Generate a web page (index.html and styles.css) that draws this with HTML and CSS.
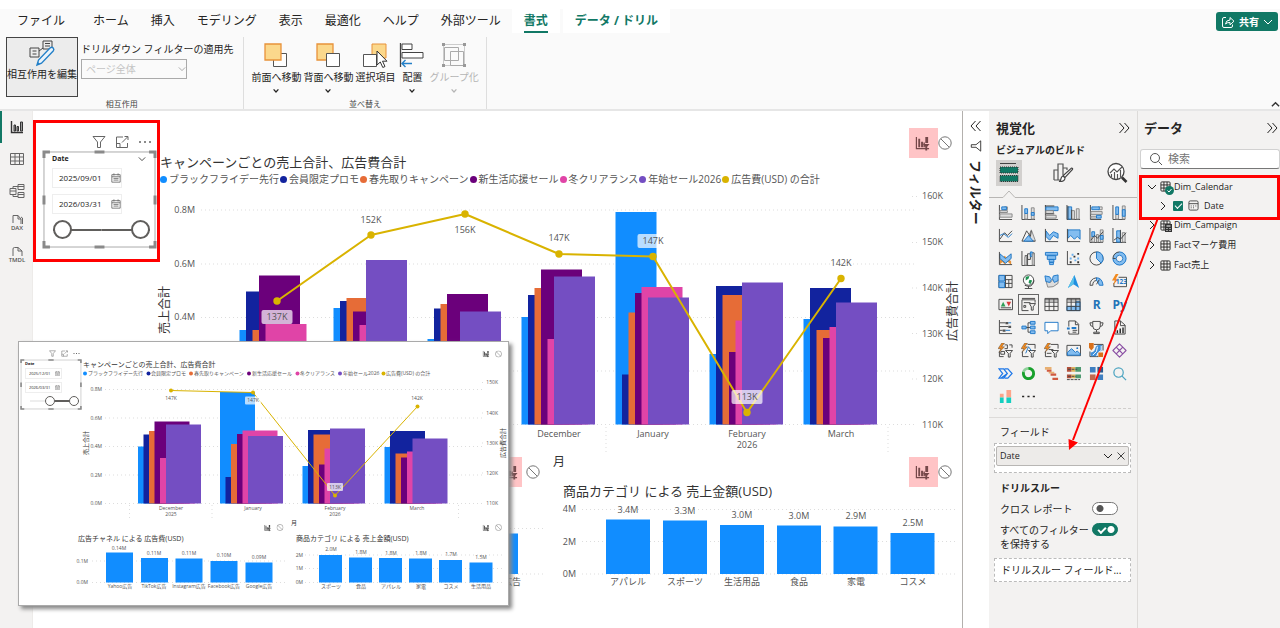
FILE: index.html
```html
<!DOCTYPE html>
<html lang="ja">
<head>
<meta charset="utf-8">
<title>レポート</title>
<link rel="stylesheet" href="styles.css">
</head>
<body>
<svg class="defs" width="0" height="0" aria-hidden="true">
  <symbol id="ix" viewBox="0 0 16 16"><path d="M1.500 1v12.500H15" fill="none" stroke="currentColor" stroke-width="1.300"/><path d="M3.500 3h2v9h-2zM6.500 6h2v6h-2zM9 7h1.500v5H9zM11 1h3v6.500h-3z" fill="currentColor"/><path d="M8.500 8.500h7l-2.500 3V15.500h-2v-4z" fill="currentColor"/></symbol>
  <symbol id="no" viewBox="0 0 14 14"><circle cx="7" cy="7" r="6.200" fill="none" stroke="#777" stroke-width="1"/><path d="M2.800 2.800l8.400 8.400" stroke="#777"/></symbol>
  <symbol id="funnel" viewBox="0 0 14 14"><path d="M1 1.500h12L8.500 7v5.500h-3V7z" fill="none" stroke="currentColor"/></symbol>
  <symbol id="focus" viewBox="0 0 14 14"><path d="M8 2H1.500v10.500h11V8M1.500 8.500H5v4M7 7.500l5.500-5.500M9.500 1.500h3.500V5" fill="none" stroke="currentColor"/></symbol>
  <symbol id="dots" viewBox="0 0 14 14"><path d="M1 6.200h2v1.600H1zM6 6.200h2v1.600H6zM11 6.200h2v1.600h-2z" fill="currentColor"/></symbol>
  <symbol id="cal" viewBox="0 0 12 12"><path d="M1 2h10v9H1zM1 4.500h10M3.500.500V3M8.500.500V3M3 6.500h6M3 8.500h6" fill="none" stroke="currentColor"/></symbol>
  <symbol id="down" viewBox="0 0 10 10"><path d="M1 3l4 4 4-4" fill="none" stroke="currentColor"/></symbol>
  <symbol id="bdown" viewBox="0 0 10 10"><path d="M2 3l3 3.200L8 3" fill="none" stroke="currentColor" stroke-width="1.600"/></symbol>
  <symbol id="right" viewBox="0 0 10 10"><path d="M3 1l4 4-4 4" fill="none" stroke="currentColor"/></symbol>
  <symbol id="dbl" viewBox="0 0 12 12"><path d="M1.500 1l4.500 5-4.500 5M6.500 1l4.500 5-4.500 5" fill="none" stroke="currentColor" stroke-width="1"/></symbol>
  <symbol id="grid" viewBox="0 0 12 12"><path d="M2 1h8q1 0 1 1v8q0 1-1 1H2q-1 0-1-1V2q0-1 1-1zM1 4.300h10M1 7.700h10M4.300 1v10M7.700 1v10" fill="none" stroke="currentColor"/></symbol>
  <symbol id="frame" viewBox="0 0 116 100" preserveAspectRatio="none"><path d="M2 2h112v96H2z" fill="none" stroke="#aaa"/><path d="M2 8V2h6M108 2h6v6M114 92v6h-6M8 98H2v-6" fill="none" stroke="#8a8a8a" stroke-width="3"/><path d="M53 2h10M53 98h10M2 46v9M114 46v9" stroke="#8a8a8a" stroke-width="3"/></symbol>
</svg>

<header class="ribbon">
  <div class="menu">
    <nav class="tabs">
      <a class="tab tab-file" href="#">ファイル</a>
      <a class="tab" href="#">ホーム</a>
      <a class="tab" href="#">挿入</a>
      <a class="tab" href="#">モデリング</a>
      <a class="tab" href="#">表示</a>
      <a class="tab" href="#">最適化</a>
      <a class="tab" href="#">ヘルプ</a>
      <a class="tab" href="#">外部ツール</a>
      <a class="tab tab-context tab-active" href="#"><span>書式</span></a>
      <a class="tab tab-context" href="#">データ / ドリル</a>
    </nav>
    <button class="share"><svg width="14" height="14" viewBox="0 0 14 14"><path d="M5 2.500H3q-1.500 0-1.500 1.500v7q0 1.500 1.500 1.500h7q1.500 0 1.500-1.500V9.500M4.500 9q.5-4 4.500-4V2.500l4 3.700-4 3.600V7.500q-3-.2-4.500 1.500z" fill="none" stroke="#fff"/></svg>共有<svg width="10" height="10"><use href="#down"/></svg></button>
  </div>
  <div class="tools">
    <section class="group">
      <div class="group-body">
        <button class="tool tool-pressed">
          <svg width="28" height="28" viewBox="0 0 28 28"><path d="M2 9h9v9H2zM15 2h9v8h-9zM4.500 12h4M4.500 15h4M17 4.500h5M17 7h5M11 12l4-3" fill="none" stroke="#444"/><path d="M9 26l1.500-5L22 9q2-1.500 3.200 0 1.300 1.500 0 3L13.500 24.200z" fill="#eaf3fb" stroke="#2480c8" stroke-width="1.400"/><path d="M9 26l1-3 2 2z" fill="#2480c8"/></svg>
          <span>相互作用を編集</span>
        </button>
        <div class="apply">
          <label for="scope">ドリルダウン フィルターの適用先</label>
          <span class="select-wrap"><select id="scope" disabled><option>ページ全体</option></select><svg width="8" height="8"><use href="#down"/></svg></span>
        </div>
      </div>
      <div class="group-name">相互作用</div>
    </section>
    <section class="group">
      <div class="group-body">
        <button class="tool"><svg width="26" height="26" viewBox="0 0 26 26"><path d="M10.500 11.500h13v13h-13z" fill="#fff" stroke="#555"/><path d="M2 2h16v16H2z" fill="#fbd88c" stroke="#e8923a" stroke-width="1.300"/></svg><span>前面へ移動</span><svg width="8" height="8"><use href="#bdown"/></svg></button>
        <button class="tool"><svg width="26" height="26" viewBox="0 0 26 26"><path d="M2 2h16v16H2z" fill="#fbd88c" stroke="#e8923a" stroke-width="1.300"/><path d="M11.500 11.500h13v13h-13z" fill="#fff" stroke="#555"/></svg><span>背面へ移動</span><svg width="8" height="8"><use href="#bdown"/></svg></button>
        <button class="tool"><svg width="26" height="26" viewBox="0 0 26 26"><path d="M10 2h14v14H10z" fill="#fbd88c" stroke="#e8923a"/><path d="M1.500 12.500h13v12h-13z" fill="#fff" stroke="#555"/><path d="M15 9v14l3.300-3 2.500 5.500 2.200-1-2.500-5.300h4.500z" fill="#fff" stroke="#333"/></svg><span>選択項目</span></button>
        <button class="tool tool-narrow"><svg width="26" height="26" viewBox="0 0 26 26"><path d="M1.500 1v24" stroke="#444" stroke-width="1.300"/><path d="M3 2h10v5.500H3zM3 10.500h21v5.500H3z" fill="#fff" stroke="#444"/><path d="M13 21.500H3M6.500 18l-3.500 3.500L6.500 25" fill="none" stroke="#2480c8" stroke-width="1.400"/></svg><span>配置</span><svg width="8" height="8"><use href="#bdown"/></svg></button>
        <button class="tool tool-off" disabled><svg width="26" height="26" viewBox="0 0 26 26"><path d="M2.500 2.500h21v21h-21z" fill="none" stroke="#ccc"/><path d="M3.500 5.500h14v13h-14zM9.500 9.500h13v14h-13z" fill="none" stroke="#aaa"/><path d="M1 1h3v3H1zM22 1h3v3h-3zM1 22h3v3H1zM22 22h3v3h-3z" fill="#999"/></svg><span>グループ化</span><svg width="8" height="8"><use href="#bdown"/></svg></button>
      </div>
      <div class="group-name">並べ替え</div>
    </section>
    <button class="collapse" aria-label="リボンを折りたたむ"><svg width="9" height="9" viewBox="0 0 10 10"><path d="M1 7l4-4 4 4" fill="none" stroke="#333" stroke-width="1.600"/></svg></button>
  </div>
</header>

<main class="work">
  <nav class="rail">
    <a class="rail-item rail-on" href="#" aria-label="レポート"><svg width="14" height="14" viewBox="0 0 14 14"><path d="M1.500 1v11.500H13" fill="none" stroke="#333" stroke-width="1.400"/><path d="M4 5h1.500v6H4zM7 6.500h1.500V11H7zM10.500 2h2v9h-2z" fill="#999" stroke="#333"/></svg></a>
    <a class="rail-item" href="#" aria-label="テーブル"><svg width="14" height="14" viewBox="0 0 14 14"><path d="M.500 1.500h13v11H.500zM.500 5h13M.500 9h13M5 1.500v11M9.500 1.500v11" fill="none" stroke="#666"/></svg></a>
    <a class="rail-item" href="#" aria-label="モデル"><svg width="16" height="16" viewBox="0 0 16 16"><path d="M1 5.500h6v6H1zM1 8h6M9 1.500h6v5H9zM9 3.500h6M9 9.500h6v5H9zM9 11.500h6M4 5.500v-2h5M4 11.500v2h5" fill="none" stroke="#666"/></svg></a>
    <a class="rail-item" href="#"><svg width="14" height="10" viewBox="0 0 14 10"><path d="M3 8V.500h5L11 4v5M8 .500V4h3M11 2l1.500 1v6" fill="none" stroke="#666"/></svg><span>DAX</span></a>
    <a class="rail-item" href="#"><svg width="14" height="10" viewBox="0 0 14 10"><path d="M3 9V2q0-1.500 1.500-1.500H8L12 4v5M8 .500V4h4" fill="none" stroke="#666"/></svg><span>TMDL</span></a>
  </nav>

  <div class="report">
    <section class="slicer slicer-marked">
      <div class="slicer-icons"><svg><use href="#funnel"/></svg><svg><use href="#focus"/></svg><svg><use href="#dots"/></svg></div>
      <div class="slicer-frame">
        <svg class="handles"><use href="#frame" width="100%" height="100%"/></svg>
        <div class="slicer-head"><b>Date</b><svg width="8" height="8"><use href="#down"/></svg></div>
        <label class="date"><input type="text" value="2025/09/01" aria-label="開始日"><svg><use href="#cal"/></svg></label>
        <label class="date"><input type="text" value="2026/03/31" aria-label="終了日"><svg><use href="#cal"/></svg></label>
        <div class="span"><input type="range" value="0" aria-label="開始"><input type="range" value="100" aria-label="終了"></div>
      </div>
    </section>

    <section class="visual visual-main">
      <div class="actions"><button class="act act-marked" aria-label="フィルター"><svg><use href="#ix"/></svg></button><button class="act act-none" aria-label="なし"><svg><use href="#no"/></svg></button></div>
      <h2>キャンペーンごとの売上合計、広告費合計</h2>
      <ul class="legend">
        <li class="s1">ブラックフライデー先行</li><li class="s2">会員限定プロモ</li><li class="s3">春先取りキャンペーン</li><li class="s4">新生活応援セール</li><li class="s5">冬クリアランス</li><li class="s6">年始セール2026</li><li class="s7">広告費(USD) の合計</li>
      </ul>
      <svg class="chart" viewBox="160 187 797 285">
        <g class="rule"><path d="M201 210H915M201 264H915M201 317.500H915M201 371H915M201 424.500H915M912 196.500h5M912 242.500h5M912 288h5M912 333.500h5M912 379h5M606 427v27M888 427v27"/></g>
        <path class="f1" d="M239.500 330h41V424.500h-41zM333.500 308h41V424.500h-41zM427.500 339h41V424.500h-41zM521.500 317h41V424.500h-41zM615.500 212h41V424.500h-41zM709.500 354h41V424.500h-41zM803.500 319h41V424.500h-41z"/>
        <path class="f2" d="M246 291.500h41V424.500h-41zM340 301h41V424.500h-41zM434 308.500h41V424.500h-41zM528 295h41V424.500h-41zM622 374.500h41V424.500h-41zM716 286h41V424.500h-41zM810 288h41V424.500h-41z"/>
        <path class="f3" d="M252.500 330h41V424.500h-41zM346.500 298h41V424.500h-41zM440.500 304h41V424.500h-41zM534.500 288h41V424.500h-41zM628.500 312.500h41V424.500h-41zM722.500 295h41V424.500h-41zM816.500 330h41V424.500h-41z"/>
        <path class="f4" d="M259 275.500h41V424.500h-41zM353 311.500h41V424.500h-41zM447 294h41V424.500h-41zM541 269.500h41V424.500h-41zM635 293h41V424.500h-41zM729 352h41V424.500h-41zM823 338h41V424.500h-41z"/>
        <path class="f5" d="M265.500 324h41V424.500h-41zM359.500 325h41V424.500h-41zM547.500 339h41V424.500h-41zM641.500 287h41V424.500h-41zM735.500 320.500h41V424.500h-41zM829.500 327h41V424.500h-41z"/>
        <path class="f6" d="M366 260h41V424.500h-41zM460 311.500h41V424.500h-41zM554 276.500h41V424.500h-41zM648 297.500h41V424.500h-41zM742 282.500h41V424.500h-41zM836 302.500h41V424.500h-41z"/>
        <path class="line" d="M277 301L371 235 465 214 559 254 653 256.500 747 412.500 841 278.500"/>
        <g class="f7"><circle cx="277" cy="301" r="3.700"/><circle cx="371" cy="235" r="3.700"/><circle cx="465" cy="214" r="3.700"/><circle cx="559" cy="254" r="3.700"/><circle cx="653" cy="256.500" r="3.700"/><circle cx="747" cy="412.500" r="3.700"/><circle cx="841" cy="278.500" r="3.700"/></g>
        <g class="tag"><rect x="261.500" y="310" width="31" height="14" rx="2"/><rect x="637.500" y="234" width="31" height="14" rx="2"/><rect x="731.500" y="390" width="31" height="14" rx="2"/></g>
        <g class="txt mid"><text x="277" y="320">137K</text><text x="371" y="223">152K</text><text x="465" y="233">156K</text><text x="559" y="241">147K</text><text x="653" y="244">147K</text><text x="747" y="400">113K</text><text x="841" y="266">142K</text>
          <text x="559" y="437">December</text><text x="653" y="437">January</text><text x="747" y="437">February</text><text x="841" y="437">March</text><text x="747" y="448">2026</text></g>
        <g class="txt end"><text x="195" y="213">0.8M</text><text x="195" y="267">0.6M</text><text x="195" y="320">0.4M</text><text x="943" y="199">160K</text><text x="943" y="245">150K</text><text x="943" y="291">140K</text><text x="943" y="337">130K</text><text x="943" y="382">120K</text><text x="943" y="428">110K</text></g>
        <g class="axis mid"><text transform="translate(169 310) rotate(-90)">売上合計</text><text transform="translate(957 311) rotate(-90)">広告費合計</text><text x="559" y="466">月</text></g>
      </svg>
    </section>

    <div class="lower">
      <section class="visual visual-channel">
        <div class="actions"><button class="act act-marked" aria-label="フィルター"><svg><use href="#ix"/></svg></button><button class="act act-none" aria-label="なし"><svg><use href="#no"/></svg></button></div>
        <svg class="chart" viewBox="160 487 385 104">
          <path class="rule" d="M190 528.500H545M190 574H545"/>
          <path class="f1" d="M474 533.500h44V574h-44z"/>
          <g class="txt end"><text x="521" y="585">広告</text></g>
        </svg>
      </section>
      <section class="visual">
        <div class="actions"><button class="act act-marked" aria-label="フィルター"><svg><use href="#ix"/></svg></button><button class="act act-none" aria-label="なし"><svg><use href="#no"/></svg></button></div>
        <h2 class="inset">商品カテゴリ による 売上金額(USD)</h2>
        <svg class="chart" viewBox="557 501 400 90">
          <path class="rule" d="M582 509.500H957M582 541.500H957M582 574H957"/>
          <path class="f1" d="M606 519.500h44V574h-44zM663 520.500h44V574h-44zM720 525h44V574h-44zM777 525.500h44V574h-44zM833.500 526.500h44V574h-44zM890.500 533h44V574h-44z"/>
          <g class="txt mid"><text x="628" y="513">3.4M</text><text x="685" y="514">3.3M</text><text x="742" y="518">3.0M</text><text x="799" y="519">3.0M</text><text x="856" y="519">2.9M</text><text x="913" y="526">2.5M</text>
            <text x="628" y="585">アパレル</text><text x="685" y="585">スポーツ</text><text x="742" y="585">生活用品</text><text x="799" y="585">食品</text><text x="856" y="585">家電</text><text x="913" y="585">コスメ</text></g>
          <g class="txt end"><text x="576" y="512">4M</text><text x="576" y="545">2M</text><text x="576" y="577">0M</text></g>
        </svg>
      </section>
    </div>
  </div>

  <aside class="filters">
    <button class="plain flip" aria-label="展開"><svg width="12" height="12"><use href="#dbl"/></svg></button>
    <svg class="turn" width="12" height="12"><use href="#funnel"/></svg>
    <h3>フィルター</h3>
  </aside>

  <div class="panes">
    <aside class="viz">
      <div class="pane-head"><h3>視覚化</h3><button class="plain" aria-label="折りたたむ"><svg width="12" height="12"><use href="#dbl"/></svg></button></div>
      <h4>ビジュアルのビルド</h4>
      <div class="modes">
        <button class="mode mode-on" aria-label="ビルド"><svg width="22" height="22" viewBox="0 0 22 22"><path d="M2 1.500h16" stroke="#444"/><path d="M2 5h18v6H2zM2 13.500h18v6H2z" fill="#117865" stroke="#333" stroke-dasharray="1 1"/></svg></button>
        <button class="mode" aria-label="書式"><svg width="22" height="22" viewBox="0 0 22 22"><path d="M2 18V8h4v10M6 18V2h5v11M11 12V6h4v2M2 18h7" fill="none" stroke="#555" stroke-width="1.200"/><path d="M19.500 6q1.500 0 1 1.500L13 15.500l-2-1.800zM11 14l2 1.800q0 4-6 3.700 2-.5 2-3 .5-2 2-2.500z" fill="#fff" stroke="#444" stroke-width="1.200"/></svg></button>
        <button class="mode" aria-label="分析"><svg width="22" height="22" viewBox="0 0 22 22"><circle cx="10" cy="9.500" r="8" fill="#fff" stroke="#444" stroke-width="1.300"/><path d="M4 11l4-4 3 3 5-5M5.500 15v-3M8.500 17v-7M11.500 17v-5M14.500 15V8" fill="none" stroke="#555" stroke-width="1.200"/><path d="M16 15.500l4.500 4.500" stroke="#333" stroke-width="2.600"/></svg></button>
      </div>
      <svg class="notch" viewBox="0 0 148 8" preserveAspectRatio="none"><path d="M0 7.500h14L20 1l6 6.500h122" fill="none" stroke="#b8b6b4"/></svg>
      <div class="gallery">
        <button aria-label="積み上げ横棒"><svg viewBox="0 0 16 16"><path class="k" d="M1.500 0v15.500"/><path class="g" d="M2 9.500h13v3.500H2zM7 2h3v3H7zM2 6h8v2H2z"/><path class="b" d="M4 2h5v3H4z"/><path class="k" d="M1.500 15.500H15"/></svg></button>
        <button aria-label="積み上げ縦棒"><svg viewBox="0 0 16 16"><path class="k" d="M1 0v15.500h14"/><path class="g" d="M4 9h3v6H4zM11 3h3v12h-3z"/><path class="b" d="M4 4h3v5H4zM11 8h3v3h-3z"/></svg></button>
        <button aria-label="集合横棒"><svg viewBox="0 0 16 16"><path class="k" d="M1.500 0v15.500H15"/><path class="b" d="M2 2h13v4H2z"/><path class="g" d="M2 6h8v3H2zM2 11h11v3H2z"/><path class="k" d="M1 1h10M2 9.500h9"/></svg></button>
        <button aria-label="集合縦棒"><svg viewBox="0 0 16 16"><path class="k" d="M1 0v15.500h14"/><path class="b" d="M2 2h4v13H2z"/><path class="g" d="M6 6h3v9H6zM11 4h3v11h-3z"/><path class="k" d="M2 1v14M6 5v10"/></svg></button>
        <button aria-label="100%横棒"><svg viewBox="0 0 16 16"><path class="k" d="M1.500 0v15.500H13"/><path class="g" d="M10 2h4v3h-4zM2 7h12v3H2zM2 12h6v2H2z"/><path class="b" d="M3 2h8v3H3zM8 11h5v3H8z"/></svg></button>
        <button aria-label="100%縦棒"><svg viewBox="0 0 16 16"><path class="k" d="M1 0v15.500h13"/><path class="g" d="M4 10h3v5H4zM11 1h3v14h-3z"/><path class="b" d="M4 2h3v8H4zM11 5h3v7h-3z"/></svg></button>

        <button aria-label="折れ線"><svg viewBox="0 0 16 16"><path class="k" d="M1.500 1v13.500H15M2 12l5-7 3 3 5-5"/><path class="bl" d="M2 8l4-2 5 4 4-4"/></svg></button>
        <button aria-label="面"><svg viewBox="0 0 16 16"><path class="g" d="M6 14l5-12 4.500 12z"/><path class="k" d="M1 14L6 3l4 6 1-6M1 14h14"/><path class="b" d="M3 14l5-6 5 6z"/></svg></button>
        <button aria-label="積み上げ面"><svg viewBox="0 0 16 16"><path class="b" d="M2 3l4 5 4-4 5 2v5l-5-3-4 5-4-4z"/><path class="k" d="M1.500 1v13.500H15"/></svg></button>
        <button aria-label="100%面"><svg viewBox="0 0 16 16"><path class="b" d="M2 2h13v10l-3-3-3 3-4-4-3 3z"/><path class="k" d="M1.500 1v13.500H15"/></svg></button>
        <button aria-label="折れ線と積み上げ"><svg viewBox="0 0 16 16"><path class="k" d="M1 0v15.500h14"/><path class="g" d="M3 9h3v6H3zM8 7h2v8H8zM12 2h3v13h-3z"/><path class="b" d="M3 4h3v5H3zM12 8h3v4h-3z"/><path class="k" d="M2 13l4-5 3 3 6-7"/></svg></button>
        <button aria-label="折れ線と集合"><svg viewBox="0 0 16 16"><path class="k" d="M1 0v15.500h14"/><path class="b" d="M5 3h4v12H5z"/><path class="g" d="M11 5h3v10h-3z"/><path class="k" d="M2 13l4-3 3 2 6-7M9 2v13"/></svg></button>

        <button aria-label="リボン"><svg viewBox="0 0 16 16"><path d="M2 3l5 6 7-6v5l-7 6-5-5z" fill="#e8923a"/><path d="M2 10l5-5 7 6v4L8 9l-6 5z" fill="#e8923a"/><path class="b" d="M2 3l6 5 6-5v5l-6 5-6-5z"/><path class="k" d="M1.500 1v13.500H15"/></svg></button>
        <button aria-label="滝"><svg viewBox="0 0 16 16"><path class="k" d="M1 0v15.500h14M4 5h3v10M7 3h3v6H7zM12 2h2v13"/><path class="b" d="M10 1h2v5h-2z"/><path class="g" d="M4 6h2v9H4zM12 3h2v12h-2z"/></svg></button>
        <button aria-label="じょうご"><svg viewBox="0 0 16 16"><path class="b" d="M1.500 1.500h13v3h-13zM3.500 5h9v4h-9zM5.500 9h5v3h-5zM6 12h4v2.500H6z"/></svg></button>
        <button aria-label="散布図"><svg viewBox="0 0 16 16"><path class="k" d="M1.500 0v14.500H15"/><path d="M12 2h2v2h-2zM8 5h2v2H8zM4 11h2v2H4zM12 11h2v2h-2z" fill="#333"/><path d="M4 7h2v2H4zM9 9h2v2H9zM12 7h2v2h-2zM6 3h2v2H6z" fill="#6ab0ee"/></svg></button>
        <button aria-label="円"><svg viewBox="0 0 16 16"><circle class="k" cx="8" cy="8" r="7"/><path class="b" d="M8 1a7 7 0 0 1 5 12L8 8z"/></svg></button>
        <button aria-label="ドーナツ"><svg viewBox="0 0 16 16"><circle cx="8" cy="8" r="5.500" fill="none" stroke="#83bdf0" stroke-width="3.500"/><path class="k" d="M8 1a7 7 0 0 0-7 7h3"/><circle class="bl" cx="8" cy="8" r="3.500"/><path class="bl" d="M8 1a7 7 0 1 1-7 7"/></svg></button>

        <button aria-label="ツリーマップ"><svg viewBox="0 0 16 16"><path class="k" d="M1 1.500h14v13H1zM8 1.500v13M8 6h7M11.500 6v8.500M8 10h7"/><path class="b" d="M1 1.500h6v6H1zM1 8.500h6v6H1z"/></svg></button>
        <button aria-label="マップ"><svg viewBox="0 0 16 16"><circle cx="8" cy="6.500" r="5.500" fill="#fff" stroke="#444"/><path d="M5 3l4-1-1 3-3 2zM9 6l3 1-2 4-2-2z" fill="#1d9350"/><path class="k" d="M4 12q8 4 10-5M8 13v2.500M4 15.500h8"/></svg></button>
        <button aria-label="塗り分け地図"><svg viewBox="0 0 16 16"><path class="g" d="M2 7l5 2 3-4 5 1v4q-5 5-11 4z"/><path class="b" d="M1 2l5 1 2 3-2 3-4-1zM10 2l5-1v6l-4 2-2-4z"/></svg></button>
        <button aria-label="Azure マップ"><svg viewBox="0 0 16 16"><path d="M9 1l5 14-6-4-6 4z" fill="#1f8fe0"/><path d="M9 1L8 11l-6 4z" fill="#5cc3ea"/></svg></button>
        <button aria-label="ゲージ"><svg viewBox="0 0 16 16"><path class="k" d="M1 12q0-7 7-8v3q-4 0-4 5z"/><path class="b" d="M8 4q6 0 7 8h-4q-1-4-3-5z"/><path class="k" d="M8 11l3-5"/></svg></button>
        <button aria-label="カード"><svg viewBox="0 0 16 16"><path class="k" d="M7 3.500h8.500v10H2v-4"/><path d="M4 0L0 7h3l-2 5 6-7H4l3-5z" fill="#f28a1e"/><text class="num" x="4" y="11">123</text></svg></button>

        <button aria-label="KPI"><svg viewBox="0 0 16 16"><path class="k" d="M1 2.500h14.500v11H1z"/><path d="M3 10l2.500-5L8 10z" fill="#2f9e58"/><path d="M9 5h5l-2.500 5z" fill="#d83b3b"/><path class="k" d="M3 11.500h11"/></svg></button>
        <button class="picked" aria-label="スライサー"><svg viewBox="0 0 16 16"><path class="k" d="M1 1.500h14M15 6V3H1v11.500h7M3 6h7M3 9h2v2H3zM9 7h6.500L13 10.500V14h-2v-3.500z"/></svg></button>
        <button aria-label="テーブル"><svg viewBox="0 0 16 16"><path class="k" d="M1 1.500h14v13H1zM1 5.500h14M1 10h14M5.500 2v12.500M10.500 2v12.500M1 3h14"/></svg></button>
        <button aria-label="マトリックス"><svg viewBox="0 0 16 16"><path class="b" d="M1 10h9v4.500H1zM10.500 5h4.500v9.500h-4.500z"/><path class="k" d="M1 1.500h14v13H1zM1 5.500h14M1 10h14M5.500 2v12.500M10.500 2v12.500M1 3h14"/></svg></button>
        <button aria-label="R"><b class="letter">R</b></button>
        <button aria-label="Python"><b class="letter">Py</b></button>

        <button aria-label="主要因"><svg viewBox="0 0 16 16"><path class="k" d="M1.500 0v14.500H15M2 3h6M2 7h9M2 11h3"/><path d="M8 2h3v2.500H8zM11 6h3v2.500h-3zM5 10h3v2.500H5z" fill="#555"/><path class="bl" d="M11 3h3M8 11h5"/></svg></button>
        <button aria-label="分解ツリー"><svg viewBox="0 0 16 16"><path class="k" d="M5 8h5M7.500 8V3H10M7.500 8v5H10"/><path class="b" d="M1 6.500h4.500v3H1zM10 1.500h5v3h-5zM10 6.500h5v3h-5zM10 11.500h5v3h-5z"/></svg></button>
        <button aria-label="Q&amp;A"><svg viewBox="0 0 16 16"><path d="M1 2.500h14v9H7L4 14.500v-3H1z" fill="#fff" stroke="#1f78c8"/></svg></button>
        <button aria-label="説明"><svg viewBox="0 0 16 16"><path class="k" d="M3 7V1h7l3.500 3.500V15H3v-3M10 1v4h3M7 11h5M7 13h4"/><path class="bl" d="M1 9h3M6 8.500h5" stroke-width="2"/></svg></button>
        <button aria-label="目標"><svg viewBox="0 0 16 16"><path class="k" d="M4 1.500h8v5q0 4-4 4t-4-4zM4 3H1q0 4 3 4M12 3h3q0 4-3 4M8 10.500V13M5 14.500h6V13H5z"/></svg></button>
        <button aria-label="ページ分割"><svg viewBox="0 0 16 16"><path class="k" d="M3 15V1h6l5 4.500V15zM9 1v5h5"/><path d="M5 11h1.500v3H5zM8 9h1.500v5H8zM11 8h1.500v6H11z" fill="#222"/></svg></button>

        <button aria-label="ボタン スライサー"><svg viewBox="0 0 16 16"><path class="k" d="M7 2h3v4H7M12 2h3v3M1.500 9v5.500H6M3 9h4v3H3zM8 8h7.500L13 11v4h-2v-4z"/><path d="M4 0L0 6h3L1 10l6-6H4l3-4z" fill="#f28a1e" stroke="#333" stroke-width=".4"/></svg></button>
        <button aria-label="テキスト スライサー"><svg viewBox="0 0 16 16"><path class="k" d="M7 1.500h8V6M1.500 9v5.500H8M8 8h7.500L13 11v4h-2v-4z"/><path class="bl" d="M5 11l3-7 3 4"/><path d="M4 0L0 6h3L1 10l6-6H4l3-4z" fill="#f28a1e" stroke="#333" stroke-width=".4"/></svg></button>
        <button aria-label="リスト スライサー"><svg viewBox="0 0 16 16"><path class="k" d="M7 1.500h8V6M1.500 9v5.500H8M5 7h5M3 11h5M8 8h7.500L13 11v4h-2v-4z"/><path d="M4 0L0 6h3L1 10l6-6H4l3-4z" fill="#f28a1e" stroke="#333" stroke-width=".4"/></svg></button>
        <button aria-label="画像"><svg viewBox="0 0 16 16"><path class="k" d="M1 2.500h14.500v11H1z"/><path class="b" d="M1.500 13v-3L6 6l4 4 2-1.500 3 3V13z"/><circle cx="12" cy="5.500" r="1" fill="#1f78c8"/></svg></button>
        <button aria-label="ArcGIS"><svg viewBox="0 0 16 16"><path class="k" d="M5 1.500h10V8M1 9v5.500h9"/><path d="M1.500 10q4 0 5-4t4-4H14v6l-5 3v3H2z" fill="#3f8fd8"/><path d="M4 13l4-4 1-5M8 14l2-4 3-2V3" fill="none" stroke="#fff"/><path d="M0 0h5v5L2.500 8 0 5zM10 10h5v5h-5z" fill="#d9701a"/></svg></button>
        <button aria-label="Power Apps"><svg viewBox="0 0 16 16"><path d="M8 1l3.500 3.500L8 8 4.500 4.500zM8 8l3.500 3.500L8 15l-3.500-3.500zM4.500 4.500L8 8l-3.500 3.500L1 8zM11.500 4.500L15 8l-3.500 3.500L8 8z" fill="none" stroke="#8a4fa3" stroke-width="1.200" stroke-linejoin="round"/></svg></button>

        <button aria-label="Power Automate"><svg viewBox="0 0 16 16"><path d="M1 3h5l4 5-4 5H1l4-5zM7 3h3.500l4.500 5-4.500 5H7M3 13l7-5" fill="none" stroke="#1f78e8" stroke-width="1.300"/></svg></button>
        <button aria-label="リング"><svg viewBox="0 0 16 16"><circle cx="8" cy="8" r="5.500" fill="none" stroke="#8fd19a" stroke-width="3"/><path d="M8 2.500a5.500 5.500 0 1 1-5.300 4" fill="none" stroke="#18a02c" stroke-width="3"/></svg></button>
        <button aria-label="ガント"><svg viewBox="0 0 16 16"><path d="M1 1h7v3H1zM5 6h6v2H5z" fill="#e8b071"/><path d="M3 4h5v2H3zM7 8h6v2.500H7zM9 12.500h6V15H9z" fill="#d0583f"/></svg></button>
        <button aria-label="ブレット"><svg viewBox="0 0 16 16"><path d="M1 1h5v5H1zM1 9h5v4H1z" fill="#b5513c"/><path d="M6 1h4v5H6zM6 9h4v4H6z" fill="#e0b45c"/><path d="M10 1h6v5h-6zM10 9h6v4h-6z" fill="#4f9a72"/><path d="M2 3.500h10M2 11h9M1 14.500h14" stroke="#444" stroke-dasharray="3 1"/></svg></button>
        <button aria-label="タイル"><svg viewBox="0 0 16 16"><path d="M1 1h6v6H1zM9 9h6v6H9z" fill="#3f7fc1"/><path d="M9 1h6v6H9z" fill="#26598f"/><path d="M1 9h6v6H1z" fill="#c1694f"/></svg></button>
        <button aria-label="検索"><svg viewBox="0 0 16 16"><circle cx="7" cy="7" r="5" fill="none" stroke="#4aa3c0" stroke-width="1.300"/><path d="M10.500 10.500L15 15" stroke="#4aa3c0" stroke-width="1.300"/></svg></button>

        <button aria-label="積み上げ"><svg viewBox="0 0 16 16"><path d="M2 5h4v4H2zM9 1h5v8H9z" fill="#fda58a"/><path d="M2 9h4v6H2zM9 9h5v6H9z" fill="#14cfc0"/></svg></button>
        <button aria-label="その他"><svg viewBox="0 0 14 14"><use href="#dots"/></svg></button>
      </div>

      <div class="wells">
        <h5>フィールド</h5>
        <div class="well well-filled"><button class="chip">Date<span><svg width="10" height="10"><use href="#down"/></svg><svg width="8" height="8" viewBox="0 0 8 8"><path d="M.500.500l7 7M7.500.500l-7 7" stroke="#444"/></svg></span></button></div>
        <h4>ドリルスルー</h4>
        <div class="opt"><label for="cross">クロス レポート</label><input class="toggle" id="cross" type="checkbox"></div>
        <div class="opt"><label for="keep">すべてのフィルター<br>を保持する</label><input class="toggle" id="keep" type="checkbox" checked></div>
        <div class="well well-empty">ドリルスルー フィールド...</div>
      </div>
    </aside>

    <aside class="data">
      <div class="pane-head"><h3>データ</h3><button class="plain" aria-label="折りたたむ"><svg width="12" height="12"><use href="#dbl"/></svg></button></div>
      <label class="search"><svg width="14" height="14" viewBox="0 0 14 14"><circle cx="6" cy="6" r="4.500" fill="none" stroke="#555"/><path d="M9.500 9.500L13 13" stroke="#555"/></svg><input type="search" placeholder="検索" aria-label="検索"></label>
      <ul class="tree">
        <li><svg width="10" height="10"><use href="#down"/></svg><span class="badge"><svg width="11" height="11"><use href="#grid"/></svg><svg class="ok" width="9" height="9" viewBox="0 0 9 9"><circle cx="4.500" cy="4.500" r="4.500" fill="#117865"/><path d="M2.500 4.500L4 6l2.500-3" fill="none" stroke="#fff"/></svg></span>Dim_Calendar</li>
        <li class="child"><svg width="10" height="10"><use href="#right"/></svg><input class="tick" type="checkbox" id="f-date" checked><svg width="11" height="11" viewBox="0 0 12 12"><path d="M2.500 1h7Q11 1 11 2.500v7Q11 11 9.500 11h-7Q1 11 1 9.500v-7Q1 1 2.500 1zM1 4h10M3 6.500h1M5.500 6.500h1M8 6.500h1M3 8.500h1M5.500 8.500h1" fill="none" stroke="#444"/></svg><label for="f-date">Date</label></li>
        <li><svg width="10" height="10"><use href="#right"/></svg><span class="badge"><svg width="11" height="11"><use href="#grid"/></svg><svg class="calc" width="7" height="8" viewBox="0 0 7 8"><path d="M0 0h7v8H0z" fill="#333"/><path d="M1.500 2h4M1.500 4.500h1M4.500 4.500h1M1.500 6.500h1M4.500 6.500h1" stroke="#fff"/></svg></span>Dim_Campaign</li>
        <li><svg width="10" height="10"><use href="#right"/></svg><svg width="11" height="11"><use href="#grid"/></svg>Factマーケ費用</li>
        <li><svg width="10" height="10"><use href="#right"/></svg><svg width="11" height="11"><use href="#grid"/></svg>Fact売上</li>
      </ul>
      <div class="mark"></div>
    </aside>
    <svg class="arrow" width="98" height="236" viewBox="0 0 98 236"><path d="M93 3L8 225" stroke="#f00" stroke-width="2"/><path d="M4 235l-.5-11 9.500 3.500z" fill="#f00"/></svg>
  </div>

  <section class="popup">
    <div class="popup-top">
      <section class="slicer slicer-mini">
        <div class="slicer-icons"><svg><use href="#funnel"/></svg><svg><use href="#focus"/></svg><svg><use href="#dots"/></svg></div>
        <div class="slicer-frame">
          <svg class="handles"><use href="#frame" width="100%" height="100%"/></svg>
          <div class="slicer-head"><b>Date</b></div>
          <label class="date"><input type="text" value="2025/12/01" aria-label="開始日"><svg><use href="#cal"/></svg></label>
          <label class="date"><input type="text" value="2026/03/31" aria-label="終了日"><svg><use href="#cal"/></svg></label>
          <div class="span"><input type="range" value="100" aria-label="開始"><input type="range" value="100" aria-label="終了"></div>
        </div>
      </section>
      <svg class="chart" viewBox="82 342 426 184">
        <g color="#444"><use href="#ix" x="482.500" y="350.500" width="7" height="7"/><use href="#no" x="495" y="350.500" width="7" height="7"/></g>
        <text class="cap" x="83" y="367">キャンペーンごとの売上合計、広告費合計</text>
        <circle class="f1" cx="85" cy="373.500" r="2"/><circle class="f2" cx="148.500" cy="373.500" r="2"/><circle class="f3" cx="191" cy="373.500" r="2"/><circle class="f4" cx="249" cy="373.500" r="2"/><circle class="f5" cx="297.500" cy="373.500" r="2"/><circle class="f6" cx="340" cy="373.500" r="2"/><circle class="f7" cx="383.500" cy="373.500" r="2"/>
        <g class="tiny"><text x="88" y="375">ブラックフライデー先行</text><text x="151" y="375">会員限定プロモ</text><text x="194" y="375">春先取りキャンペーン</text><text x="252" y="375">新生活応援セール</text><text x="300" y="375">冬クリアランス</text><text x="343" y="375">年始セール2026</text><text x="386" y="375">広告費(USD) の合計</text></g>
        <path class="rule" d="M105 389.500H484M105 418H484M105 446.500H484M105 475H484M105 503.500H484M482 382.500h3M482 413h3M482 443h3M482 473h3M129.500 505v14M212 505v14M458.500 505v14"/>
        <path class="f1" d="M138 446.500h35V503.500h-35zM220 392h35V503.500h-35zM302.500 466h35V503.500h-35zM384.500 447h35V503.500h-35z"/>
        <path class="f2" d="M143.500 434.500h35V503.500h-35zM225.500 477h35V503.500h-35zM308 430h35V503.500h-35zM390 431h35V503.500h-35z"/>
        <path class="f3" d="M149 431h35V503.500h-35zM231 444h35V503.500h-35zM313.500 434.500h35V503.500h-35zM395.500 453.500h35V503.500h-35z"/>
        <path class="f4" d="M154.500 421.500h35V503.500h-35zM237 434h35V503.500h-35zM319 464.500h35V503.500h-35zM401 457.500h35V503.500h-35z"/>
        <path class="f5" d="M160 458h35V503.500h-35zM242.500 430.500h35V503.500h-35zM324.500 448.500h35V503.500h-35zM407 451.500h35V503.500h-35z"/>
        <path class="f6" d="M166 424.500h35V503.500h-35zM248 436h35V503.500h-35zM330 428.500h35V503.500h-35zM412.500 438.500h35V503.500h-35z"/>
        <path class="line thin" d="M171 390.500L253 392.500 335 495.500 417.500 406.500"/>
        <g class="f7"><circle cx="171" cy="390.500" r="2"/><circle cx="253" cy="392.500" r="2"/><circle cx="335" cy="495.500" r="2"/><circle cx="417.500" cy="406.500" r="2"/></g>
        <g class="tag"><rect x="245" y="396.500" width="16" height="8" rx="1"/><rect x="327" y="483" width="16" height="8" rx="1"/></g>
        <g class="tiny mid"><text x="171" y="400">147K</text><text x="253" y="402">147K</text><text x="335" y="489">113K</text><text x="417" y="400">142K</text><text x="171" y="510">December</text><text x="253" y="510">January</text><text x="335" y="510">February</text><text x="417" y="510">March</text><text x="171" y="516">2025</text><text x="335" y="516">2026</text></g>
        <g class="tiny end"><text x="102" y="391">0.8M</text><text x="102" y="420">0.6M</text><text x="102" y="448">0.4M</text><text x="102" y="477">0.2M</text><text x="102" y="505">0.0M</text><text x="498" y="384">150K</text><text x="498" y="415">140K</text><text x="498" y="445">130K</text><text x="498" y="475">120K</text><text x="498" y="505">110K</text></g>
        <g class="small mid"><text transform="translate(88 443) rotate(-90)">売上合計</text><text transform="translate(505 443) rotate(-90)">広告費合計</text><text x="294" y="525">月</text></g>
      </svg>
    </div>
    <svg class="chart" viewBox="19 523 489 82">
      <g color="#444"><use href="#ix" x="264" y="524.500" width="7" height="7"/><use href="#no" x="276.500" y="524" width="7" height="7"/><use href="#ix" x="482.500" y="524.500" width="7" height="7"/><use href="#no" x="495" y="524" width="7" height="7"/></g>
      <text class="cap" x="78" y="541">広告チャネル による 広告費(USD)</text><text class="cap" x="296" y="541">商品カテゴリ による 売上金額(USD)</text>
      <path class="rule" d="M92 561H286M92 582.500H286M305 555H505M305 568.500H505M305 582.500H505"/>
      <path class="f1" d="M106 552.500h27V582.500h-27zM141 558h27V582.500h-27zM175.500 558.500h27V582.500h-27zM210.500 561h27V582.500h-27zM245.500 562.500h27V582.500h-27zM319 555h23V582.500h-23zM349 557.500h23V582.500h-23zM379 558h23V582.500h-23zM409 558.500h23V582.500h-23zM439 560h23V582.500h-23zM469.500 562.500h23V582.500h-23z"/>
      <g class="tiny mid"><text x="119" y="550">0.14M</text><text x="154" y="555">0.11M</text><text x="189" y="555">0.11M</text><text x="224" y="557">0.10M</text><text x="259" y="559">0.09M</text><text x="331" y="551">2.0M</text><text x="361" y="554">1.8M</text><text x="391" y="555">1.8M</text><text x="421" y="555">1.8M</text><text x="451" y="556">1.7M</text><text x="481" y="559">1.5M</text>
        <text x="120" y="588">Yahoo広告</text><text x="154" y="588">TikTok広告</text><text x="189" y="588">Instagram広告</text><text x="224" y="588">Facebook広告</text><text x="259" y="588">Google広告</text><text x="331" y="588">スポーツ</text><text x="361" y="588">食品</text><text x="391" y="588">アパレル</text><text x="421" y="588">家電</text><text x="451" y="588">コスメ</text><text x="481" y="588">生活用品</text></g>
      <g class="tiny end"><text x="88" y="563">0.1M</text><text x="88" y="584">0.0M</text><text x="303" y="557">2M</text><text x="303" y="570">1M</text><text x="303" y="584">0M</text></g>
    </svg>
  </section>
</main>
</body>
</html>
```
FILE: styles.css
```css
* { box-sizing: border-box; }
body { margin: 0; min-height: 100vh; display: flex; flex-direction: column; background: #fff; color: #252423; font: 10px/14px "Open Sans", "Noto Sans CJK JP", sans-serif; }
button { font: inherit; color: inherit; background: none; border: 0; padding: 0; }
input, select { font: inherit; color: inherit; margin: 0; }
h2, h3, h4, h5, ul { margin: 0; padding: 0; font-weight: 400; list-style: none; }
a { color: inherit; text-decoration: none; }
svg { display: block; flex: none; }
.defs { position: absolute; }

/* Ribbon */
.ribbon { margin-top: 9px; background: #fafafa; border-bottom: 2px solid #e6e6e6; }
.menu { display: flex; justify-content: space-between; align-items: flex-start; height: 24px; }
.tabs { display: flex; font-size: 12px; line-height: 24px; padding-left: 6px; white-space: nowrap; }
.tab { padding: 0 11px; }
.tab-file { margin-right: 6px; }
.tab-context { background: #fff; color: #117865; font-weight: 700; padding: 0 12px; margin-right: 3px; }
.tab-active span { display: block; height: 24px; border-bottom: 2px solid #117865; }
.share { display: flex; align-items: center; gap: 4px; height: 19px; margin: 3px 2px 0 0; padding: 0 5px; border-radius: 3px; background: #117865; color: #fff; font-weight: 700; }
.tools { display: flex; min-height: 76px; padding: 4px 0 0; }
.group { border-right: 1px solid #dedede; padding: 0 6px; display: flex; flex-direction: column; justify-content: space-between; }
.group-body { display: flex; align-items: flex-start; height: 60px; }
.group-name { text-align: center; font-size: 8px; line-height: 10px; color: #444; }
.tool { display: flex; flex-direction: column; align-items: center; gap: 3px; padding: 5px 1px 0; white-space: nowrap; }
.tool span { line-height: 13px; }
.tool-narrow { padding: 5px 3px 0; }
.tool-off { color: #b5b5b5; }
.tool-pressed { border: 1px solid #444; background: #ececec; height: 60px; padding: 1px 0 0; gap: 1px; }
.apply { padding: 5px 4px 0 3px; white-space: nowrap; }
.select-wrap { display: flex; align-items: center; position: relative; width: 106px; margin-top: 3px; }
.select-wrap select { appearance: none; width: 100%; height: 20px; padding: 0 4px; border: 1px solid #aaa; background: #fafafa; color: #c4c4c4; opacity: 1; }
.select-wrap svg { position: absolute; right: 1px; color: #999; }
.collapse { margin-left: auto; align-self: flex-end; }

/* Work area */
.work { flex: 1; display: flex; position: relative; }
.rail { width: 33px; flex: none; background: #f3f2f1; border-right: 1px solid #edebe9; }
.rail-item { display: flex; flex-direction: column; align-items: center; justify-content: center; height: 32px; border-left: 2px solid transparent; }
.rail-on { border-left-color: #117865; }
.rail-item span { font-size: 6px; line-height: 6px; color: #555; font-weight: 600; }
.report { flex: 1; min-width: 0; display: grid; grid-template-columns: 127px minmax(0, 1fr); align-content: start; padding-right: 5px; }

/* Slicer */
.slicer { align-self: start; }
.slicer-marked { margin-top: 9px; border: 3px solid #f00; padding: 12px 0 10px 6px; }
.slicer-icons { display: flex; justify-content: flex-end; gap: 9px; padding-right: 5px; color: #666; }
.slicer-icons svg { width: 14px; height: 14px; }
.slicer-frame { position: relative; margin-top: 1px; padding: 2px 7px 10px 10px; }
.handles { position: absolute; left: 0; top: 0; width: 100%; height: 100%; pointer-events: none; }
.slicer-head { display: flex; justify-content: space-between; align-items: center; font-size: 7px; line-height: 14px; padding-right: 4px; }
.date { display: flex; align-items: center; width: 70px; height: 20px; padding-left: 6px; margin: 2px 0 6px; border: 1px solid #eee; }
.date input { width: 52px; border: 0; padding: 0; font-size: 8px; background: none; }
.date svg { width: 10px; height: 10px; color: #666; }
.span { display: flex; margin: 0 0 0 1px; }
.span input { appearance: none; width: 50%; height: 19px; background: linear-gradient(#605e5c, #605e5c) center / 100% 2px no-repeat; }
.span input::-webkit-slider-thumb { appearance: none; width: 19px; height: 19px; border: 2px solid #605e5c; border-radius: 50%; background: #fff; }

/* Visuals */
.visual { min-width: 0; }
.visual-main { padding-top: 17px; }
.actions { display: flex; justify-content: flex-end; align-items: center; height: 30px; padding-right: 5px; }
.act-marked { width: 29px; height: 30px; padding-left: 6px; background: #ffc4c6; color: #75484a; }
.act-marked svg { width: 15px; height: 15px; }
.act-none svg { width: 14px; height: 14px; }
.visual-channel .act-marked { margin-right: 4px; padding-left: 10px; }
.visual h2 { font-size: 13px; line-height: 20px; margin-top: -6px; color: #333; }
.visual .inset { padding-left: 6px; }
.legend { display: flex; gap: 1px; line-height: 15px; color: #555; white-space: nowrap; }
.legend li { display: flex; align-items: center; gap: 2px; }
.legend li::before { content: ""; width: 7px; height: 7px; border-radius: 50%; background: currentColor; }
.legend .s1::before { background: #118dff; }
.legend .s2::before { background: #12239e; }
.legend .s3::before { background: #e66c37; }
.legend .s4::before { background: #6b007b; }
.legend .s5::before { background: #e044a7; }
.legend .s6::before { background: #744ec2; }
.legend .s7::before { background: #d9b300; }
.chart { width: 100%; height: auto; overflow: visible; }
.f1 { fill: #118dff; }
.f2 { fill: #12239e; }
.f3 { fill: #e66c37; }
.f4 { fill: #6b007b; }
.f5 { fill: #e044a7; }
.f6 { fill: #744ec2; }
.f7 { fill: #d9b300; }
.line { fill: none; stroke: #d9b300; stroke-width: 2; stroke-linejoin: round; }
.thin { stroke-width: 1; }
.rule { fill: none; stroke: #ddd; stroke-dasharray: 1 3; }
.tag { fill: #fff; fill-opacity: .7; }
.txt { font-size: 9px; fill: #555; }
.axis { font-size: 12px; fill: #333; }
.tiny { font-size: 5px; fill: #555; }
.small { font-size: 6px; fill: #333; }
.cap { font-size: 7px; fill: #333; }
.mid { text-anchor: middle; }
.end { text-anchor: end; }
.lower { grid-column: 2; display: grid; grid-template-columns: 385fr 400fr; gap: 12px; margin-top: -15px; }

/* Overlay report */
.popup { position: absolute; left: 18px; top: 230px; width: 491px; border: 1px solid #aaa; background: #fff; box-shadow: 3px 3px 4px #888; }
.popup-top { display: flex; height: 181px; }
.popup-top .chart { flex: 1; width: auto; min-width: 0; height: 184px; }
.slicer-mini { width: 63px; padding: 8px 0 0 1px; flex: none; }
.slicer-mini .slicer-icons { gap: 5px; padding-right: 2px; }
.slicer-mini .slicer-icons svg { width: 7px; height: 7px; }
.slicer-mini .slicer-frame { margin-top: 2px; padding: 1px 3px 4px 5px; }
.slicer-mini .slicer-head { font-size: 4px; line-height: 7px; }
.slicer-mini .date { width: 37px; height: 11px; padding-left: 3px; margin: 1px 0 3px; }
.slicer-mini .date input { width: 26px; font-size: 4px; height: 8px; }
.slicer-mini .date svg { width: 5px; height: 5px; }
.slicer-mini .span { margin-left: 5px; }
.slicer-mini .span input { height: 10px; }
.slicer-mini .span input:first-child { background-image: linear-gradient(#eee, #eee); }
.slicer-mini .span input::-webkit-slider-thumb { width: 10px; height: 10px; border-width: 1px; }

/* Filter strip */
.filters { width: 27px; flex: none; border-left: 1px solid #b3b0ad; display: flex; flex-direction: column; align-items: center; gap: 8px; padding-top: 9px; background: #fff; }
.filters h3 { writing-mode: vertical-rl; text-orientation: sideways; font-size: 13px; line-height: 16px; font-weight: 700; }
.flip { transform: rotate(180deg); }
.turn { transform: rotate(90deg); }

/* Panes */
.panes { display: flex; position: relative; flex: none; background: #f3f2f1; }
.viz { width: 148px; }
.data { width: 143px; border-left: 1px solid #dddbd9; position: relative; }
.pane-head { display: flex; justify-content: space-between; align-items: center; padding: 8px 7px 6px; }
.pane-head h3 { font-size: 13px; line-height: 18px; font-weight: 700; }
.data .pane-head { padding: 8px 2px 6px 6px; }
.viz h4 { font-weight: 700; padding-left: 7px; }
.modes { display: flex; justify-content: space-between; padding: 3px 7px 4px; }
.mode { width: 26px; height: 26px; display: grid; place-items: center; }
.mode-on { background: #d2d0ce; }
.notch { width: 100%; height: 8px; }
.gallery { display: grid; grid-template-columns: repeat(6, 1fr); grid-auto-rows: 23px; margin: 3px 6px 0 5px; border-bottom: 1px dashed #d0cecc; }
.gallery button { display: grid; place-items: center; }
.gallery svg { width: 15px; height: 15px; }
.picked { outline: 1px solid #666; outline-offset: -2px; }
.letter { font-size: 12px; color: #2474b8; }
.num { font-size: 7px; font-weight: 700; fill: #1f78c8; }
.k { fill: none; stroke: #444; }
.g { fill: #ddd; stroke: #888; }
.b { fill: #83bdf0; stroke: #1f78c8; }
.bl { fill: none; stroke: #1f78c8; }
.wells { border-top: 1px solid #dddbd9; margin-top: 8px; padding: 7px 6px 0 5px; }
.wells h5, .wells h4 { font-size: 10px; line-height: 14px; padding-left: 6px; }
.well { background: #fff; border: 1px dashed #bbb; }
.well-filled { padding: 2px 1px 6px; margin: 4px 0 8px; }
.chip { display: flex; justify-content: space-between; align-items: center; width: 100%; height: 20px; padding: 0 3px; font-size: 9px; background: #edebe9; border: 1px solid #b8b6b4; border-radius: 2px; }
.chip span { display: flex; align-items: center; gap: 4px; }
.opt { display: flex; justify-content: space-between; align-items: flex-start; padding: 7px 13px 0 6px; white-space: nowrap; }
.toggle { appearance: none; flex: none; width: 26px; height: 13px; border: 1px solid #777; border-radius: 7px; background: radial-gradient(circle at 7px 50%, #555 3px, transparent 4px) #fff; }
.toggle:checked { border-color: #117865; background: radial-gradient(circle at 18px 50%, #fff 3px, transparent 4px) #117865; }
.toggle:checked::after, .tick::after { content: ""; display: block; width: 6px; height: 3px; border: solid #fff; border-width: 0 0 2px 2px; transform: rotate(-45deg); margin: 3px 0 0 5px; }
.well-empty { margin-top: 7px; padding: 4px 6px; white-space: nowrap; overflow: hidden; }
.search { display: flex; align-items: center; gap: 5px; height: 20px; margin: 6px 0 8px 2px; padding-left: 8px; background: #fff; border: 1px solid #d1d1d1; border-bottom-color: #777; border-radius: 3px; }
.search input { flex: 1; min-width: 0; border: 0; padding: 0; font-size: 11px; background: none; outline: 0; }
.tree { font-size: 9px; padding-left: 9px; }
.tree li { display: flex; align-items: center; gap: 3px; height: 19px; white-space: nowrap; }
.tree li + li + li { height: 20px; }
.tree .child { padding-left: 11px; gap: 5px; }
.badge { position: relative; }
.ok { position: absolute; left: 5px; top: 5px; }
.calc { position: absolute; left: 5px; top: 4px; }
.tick { appearance: none; width: 10px; height: 10px; background: #117865; border-radius: 1px; }
.tick::after { margin: 2px 0 0 2px; border-width: 0 0 1px 1px; }
.mark { position: absolute; left: 1px; right: 0; top: 64px; height: 45px; border: 3px solid #f00; }
.arrow { position: absolute; left: 76px; top: 104px; pointer-events: none; }
```
